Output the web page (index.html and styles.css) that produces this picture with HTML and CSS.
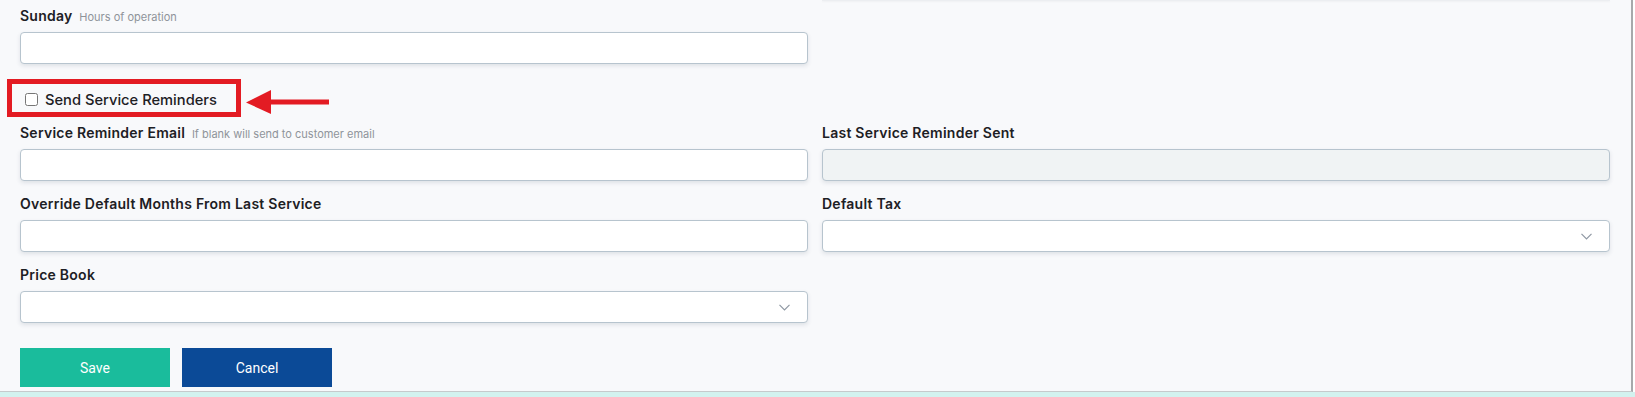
FILE: index.html
```html
<!DOCTYPE html>
<html>

<head>
    <meta charset="utf-8">
    <meta name="viewport" content="width=device-width, initial-scale=1.0">
    <title>Customer Settings</title>
    <link rel="stylesheet" href="styles.css">
</head>

<body>
    <div class="panel">
        <div class="grid top-edge">
            <div></div>
            <div class="edge-line"></div>
        </div>

        <div class="grid">
            <div class="field">
                <label class="label">Sunday <span class="hint">Hours of operation</span></label>
                <input class="textbox" type="text">
            </div>
        </div>

        <div class="reminder">
            <label class="reminder-box">
                <input type="checkbox" class="check">
                <span>Send Service Reminders</span>
            </label>
            <svg class="arrow" width="83" height="24" viewBox="0 0 83 24">
                <polygon points="0,12.5 25,0 25,24" fill="#e31b23"/>
                <rect x="24" y="9.5" width="59" height="5" fill="#e31b23"/>
            </svg>
        </div>

        <div class="grid">
            <div class="field">
                <label class="label">Service Reminder Email <span class="hint">If blank will send to customer email</span></label>
                <input class="textbox" type="text">
            </div>
            <div class="field">
                <label class="label">Last Service Reminder Sent</label>
                <input class="textbox" type="text" disabled>
            </div>
            <div class="field">
                <label class="label">Override Default Months From Last Service</label>
                <input class="textbox" type="text">
            </div>
            <div class="field">
                <label class="label">Default Tax</label>
                <div class="textbox select">
                    <svg width="11" height="7" viewBox="0 0 11 7"><polyline points="0.5,0.8 5.5,5.8 10.5,0.8" fill="none" stroke="#8f98a3" stroke-width="1.2"/></svg>
                </div>
            </div>
            <div class="field">
                <label class="label">Price Book</label>
                <div class="textbox select">
                    <svg width="11" height="7" viewBox="0 0 11 7"><polyline points="0.5,0.8 5.5,5.8 10.5,0.8" fill="none" stroke="#8f98a3" stroke-width="1.2"/></svg>
                </div>
            </div>
        </div>

        <div class="actions">
            <button class="button save">Save</button>
            <button class="button cancel">Cancel</button>
        </div>
    </div>
    <div class="footer-strip"></div>
</body>

</html>
```

FILE: styles.css
```css
html, body {
    font-family: Inter, "Open Sans", sans-serif;
    font-size: 14px;
}

body {
    margin: 0;
    padding: 0;
    height: 397px;
    overflow: hidden;
    background: #ffffff;
}

.panel {
    box-sizing: border-box;
    width: 1633px;
    height: 392px;
    padding: 0 21px 0 20px;
    background: #f8f9fb;
    border-right: 2px solid #a7a9ab;
    border-bottom: 1px solid #c6cacc;
    overflow: hidden;
}

.grid {
    display: grid;
    grid-template-columns: 1fr 1fr;
    column-gap: 14px;
}

.top-edge {
    height: 1px;
    margin-bottom: 5px;
}

.edge-line {
    background: #eceef1;
    box-shadow: 0 1px 2px rgba(0, 0, 0, 0.05);
}

.field {
    display: flex;
    flex-direction: column;
    margin-bottom: 13px;
}

.label {
    height: 20px;
    line-height: 20px;
    margin-bottom: 6px;
    font-weight: 600;
    letter-spacing: 0.25px;
    color: #1d2024;
    white-space: nowrap;
}

.hint {
    margin-left: 3px;
    font-size: 11px;
    font-weight: 400;
    letter-spacing: 0;
    color: #8f949a;
}

.textbox {
    box-sizing: border-box;
    height: 32px;
    width: 100%;
    margin: 0;
    background: #ffffff;
    border: 1px solid #b7c4ce;
    border-radius: 4px;
    box-shadow: 0 2px 4px rgba(40, 60, 80, 0.12);
    outline: none;
}

.textbox:disabled {
    background: #f0f3f4;
}

.select {
    display: flex;
    align-items: center;
    justify-content: flex-end;
    padding-right: 17px;
}

.reminder {
    display: flex;
    align-items: center;
    margin: 2px 0 6px -13px;
}

.reminder-box {
    box-sizing: border-box;
    display: flex;
    align-items: center;
    width: 234px;
    height: 38px;
    padding: 3px 0 0 13px;
    border: 5px solid #e31b23;
    font-size: 14.7px;
    font-weight: 500;
    color: #1d2024;
    white-space: nowrap;
}

.check {
    width: 13px;
    height: 13px;
    margin: 0 7px 0 0;
}

.arrow {
    margin: 7px 0 0 5px;
}

.actions {
    display: flex;
    gap: 12px;
    margin-top: 12px;
}

.button {
    width: 150px;
    height: 39px;
    border: none;
    border-radius: 0;
    font-family: Roboto, "Liberation Sans", sans-serif;
    font-size: 14px;
    color: #ffffff;
    cursor: pointer;
}

.save {
    background: #1abc9c;
}

.cancel {
    background: #0b4a97;
}

.footer-strip {
    height: 5px;
    background: #d3f2ef;
}
```
